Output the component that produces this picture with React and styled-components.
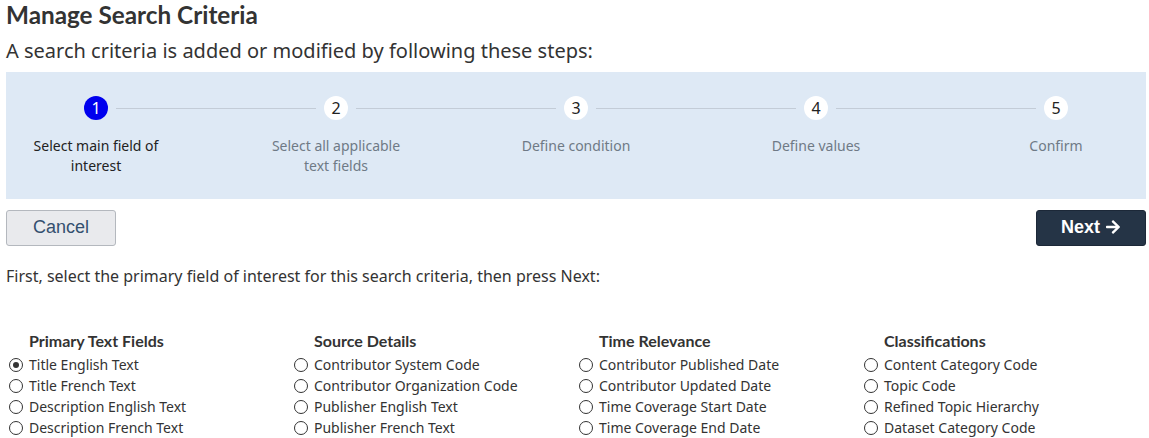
import React, { useState } from 'react';
import styled, { createGlobalStyle } from 'styled-components';
import { FaArrowRight } from 'react-icons/fa';

const GlobalStyle = createGlobalStyle`
  body {
    margin: 0;
    background: #fff;
    font-family: "Noto Sans", "Open Sans", sans-serif;
    color: #333;
  }
`;

const steps = [
  'Select main field of interest',
  'Select all applicable text fields',
  'Define condition',
  'Define values',
  'Confirm'
];

const groups = [
  {
    title: 'Primary Text Fields',
    items: ['Title English Text', 'Title French Text', 'Description English Text', 'Description French Text']
  },
  {
    title: 'Source Details',
    items: ['Contributor System Code', 'Contributor Organization Code', 'Publisher English Text', 'Publisher French Text']
  },
  {
    title: 'Time Relevance',
    items: ['Contributor Published Date', 'Contributor Updated Date', 'Time Coverage Start Date', 'Time Coverage End Date']
  },
  {
    title: 'Classifications',
    items: ['Content Category Code', 'Topic Code', 'Refined Topic Hierarchy', 'Dataset Category Code']
  }
];

const Page = styled.div`
  padding: 0 3px 0 6px;
`;

const Title = styled.h1`
  margin: 0;
  font-family: Lato, "Liberation Sans", sans-serif;
  font-weight: 700;
  font-size: 24.3px;
  line-height: 30px;
  color: #333;
`;

const Intro = styled.p`
  margin: 6px 0 0;
  font-size: 20px;
  line-height: 30px;
  color: #333;
`;

const StepperBox = styled.div`
  margin-top: 6px;
  background: #dee9f5;
  padding: 24px 0 23px;
`;

const Track = styled.div`
  display: flex;
  align-items: center;
  padding: 0 78px;
`;

const Circle = styled.div`
  width: 24px;
  height: 24px;
  border-radius: 50%;
  flex: none;
  display: flex;
  align-items: center;
  justify-content: center;
  font-size: 16px;
  background: ${props => (props.active ? '#0000ee' : '#fff')};
  color: ${props => (props.active ? '#fff' : '#222')};
`;

const Connector = styled.div`
  flex: 1;
  height: 1px;
  margin: 0 8px;
  background: #c3ccd7;
`;

const Labels = styled.div`
  display: flex;
  justify-content: space-between;
  padding: 0 20px;
  margin-top: 16px;
`;

const StepLabel = styled.div`
  width: 140px;
  text-align: center;
  font-size: 14px;
  line-height: 20px;
  color: ${props => (props.active ? '#222' : '#6f7a86')};
`;

const ButtonRow = styled.div`
  display: flex;
  justify-content: space-between;
  margin-top: 11px;
`;

const Button = styled.button`
  width: 110px;
  height: 36px;
  border-radius: 3px;
  font-family: "Liberation Sans", Arial, sans-serif;
  font-size: 18px;
  display: flex;
  align-items: center;
  justify-content: center;
  gap: 5px;
  padding: 0 0 2px;
  cursor: pointer;
  border: 1px solid ${props => (props.primary ? '#1c2838' : '#b4b8be')};
  background: ${props => (props.primary ? '#253446' : '#e9eaed')};
  color: ${props => (props.primary ? '#fff' : '#34506f')};
  font-weight: ${props => (props.primary ? 700 : 400)};
`;

const Instruction = styled.p`
  margin: 19px 0 0;
  font-size: 16px;
  line-height: 22px;
  color: #333;
`;

const Columns = styled.div`
  display: grid;
  grid-template-columns: repeat(4, 285px);
  margin-top: 41px;
  padding-left: 3px;
`;

const Group = styled.div`
  display: flex;
  flex-direction: column;
`;

const GroupTitle = styled.div`
  font-family: Lato, "Liberation Sans", sans-serif;
  font-weight: 700;
  font-size: 16px;
  line-height: 26px;
  padding-left: 20px;
  color: #333;
`;

const Option = styled.label`
  display: flex;
  align-items: center;
  gap: 6px;
  font-size: 14px;
  line-height: 21px;
  color: #333;
  cursor: pointer;
`;

const Radio = styled.input`
  appearance: none;
  margin: 0;
  width: 14px;
  height: 14px;
  border: 1.5px solid #333;
  border-radius: 50%;
  box-sizing: border-box;
  display: grid;
  place-items: center;
  &:checked::after {
    content: '';
    width: 6px;
    height: 6px;
    border-radius: 50%;
    background: #333;
  }
`;

export default function App() {
  const [selected, setSelected] = useState('Title English Text');
  return (
    <Page>
      <GlobalStyle />
      <Title>Manage Search Criteria</Title>
      <Intro>A search criteria is added or modified by following these steps:</Intro>
      <StepperBox>
        <Track>
          {steps.map((s, i) => (
            <React.Fragment key={s}>
              {i > 0 && <Connector />}
              <Circle active={i === 0}>{i + 1}</Circle>
            </React.Fragment>
          ))}
        </Track>
        <Labels>
          {steps.map((s, i) => (
            <StepLabel key={s} active={i === 0}>{s}</StepLabel>
          ))}
        </Labels>
      </StepperBox>
      <ButtonRow>
        <Button>Cancel</Button>
        <Button primary>Next <FaArrowRight size={16} /></Button>
      </ButtonRow>
      <Instruction>First, select the primary field of interest for this search criteria, then press Next:</Instruction>
      <Columns>
        {groups.map(g => (
          <Group key={g.title}>
            <GroupTitle>{g.title}</GroupTitle>
            {g.items.map(item => (
              <Option key={item}>
                <Radio
                  type="radio"
                  name="field"
                  checked={selected === item}
                  onChange={() => setSelected(item)}
                />
                {item}
              </Option>
            ))}
          </Group>
        ))}
      </Columns>
    </Page>
  );
}
